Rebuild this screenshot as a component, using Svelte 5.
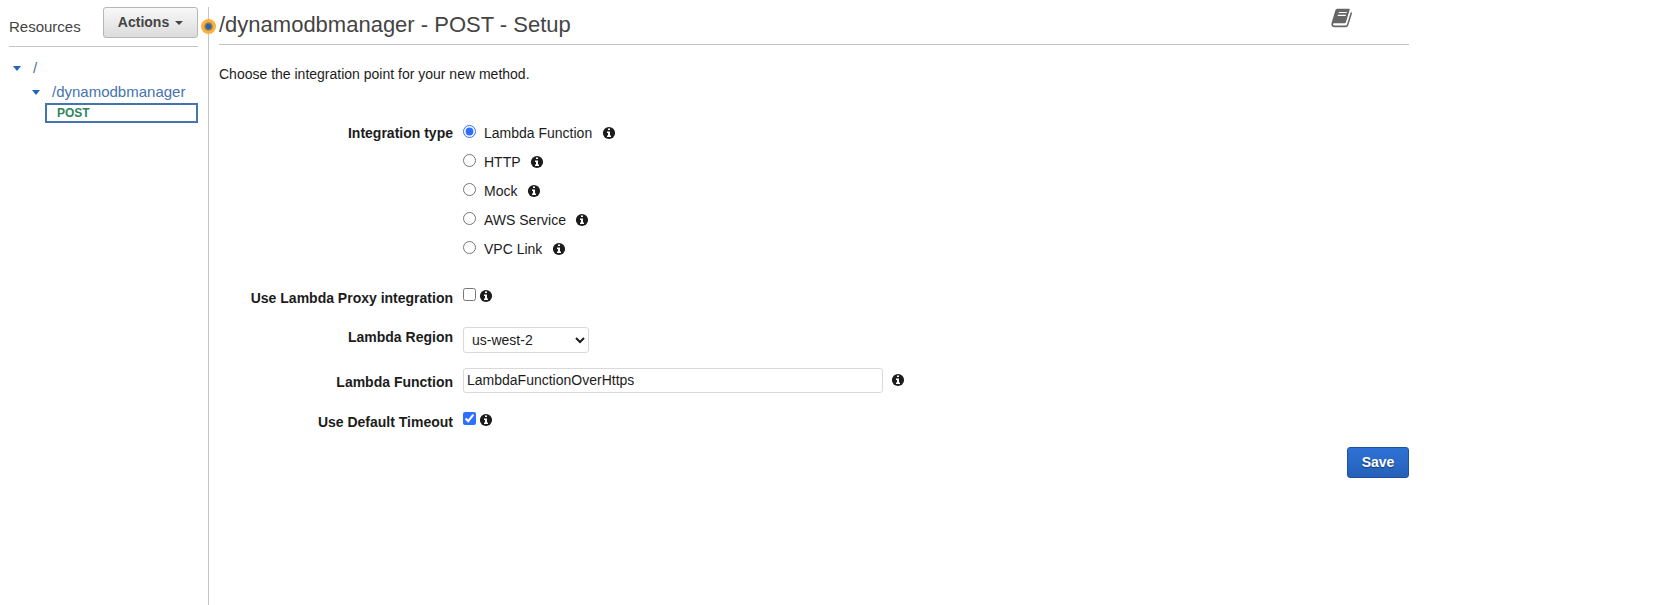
<script>
  const types = ['Lambda Function', 'HTTP', 'Mock', 'AWS Service', 'VPC Link'];
  let selected = $state('Lambda Function');
  let proxy = $state(false);
  let timeout = $state(true);
  let region = $state('us-west-2');
  let fn = $state('LambdaFunctionOverHttps');
</script>

{#snippet info()}
  <svg class="info" viewBox="0 0 12 12" width="12" height="12" aria-hidden="true">
    <circle cx="6" cy="6" r="6.1" fill="#1c1c1c" />
    <path d="M5 1.5h2v1.6H5zM4 4.4h3v4.1h1V10H4V8.5h1V6H4z" fill="#fff" />
  </svg>
{/snippet}

<div class="page">
  <aside>
    <div class="side-head">
      <span class="side-title">Resources</span>
      <button class="actions">Actions <i class="caret"></i></button>
    </div>
    <nav>
      <a class="node root" href="#root"><i class="arrow"></i><span>/</span></a>
      <a class="node child" href="#child"><i class="arrow"></i><span>/dynamodbmanager</span></a>
      <div class="method">POST</div>
    </nav>
  </aside>

  <div class="divider"><span class="handle"></span></div>

  <main>
    <header>
      <h1>/dynamodbmanager - POST - Setup</h1>
      <svg class="book" width="22" height="20" viewBox="0 0 22 20" aria-hidden="true">
        <path d="M6.2 .7H17.8Q19 .7 18.7 1.8L15 14Q14.6 15.3 13.3 15.3H3.2Q1.9 15.3 2 16.3Q2.2 17.6 3.6 17.6H14.6Q15.7 17.6 16 16.5L19.9 3.7Q21.3 4.5 20.9 5.8L17.3 17.2Q16.7 19.2 14.7 19.2H3.4Q.4 19.2 .4 16.2Q.4 15 .9 13.7L4.4 2.2Q4.8 .7 6.2 .7Z" fill="#666" />
        <path d="M7.7 4.5H15.7M6.8 7.4H14.8" stroke="#fff" stroke-width="1.2" />
      </svg>
    </header>
    <p class="intro">Choose the integration point for your new method.</p>

    <div class="row type-row">
      <span class="label">Integration type</span>
      <div class="types">
        {#each types as type}
          <label class="option">
            <input type="radio" name="type" value={type} bind:group={selected} />
            <span>{type}</span>
            {@render info()}
          </label>
        {/each}
      </div>
    </div>
    <div class="row proxy-row">
      <label class="label" for="proxy">Use Lambda Proxy integration</label>
      <div class="check"><input id="proxy" type="checkbox" bind:checked={proxy} />{@render info()}</div>
    </div>
    <div class="row region-row">
      <label class="label" for="region">Lambda Region</label>
      <select id="region" bind:value={region}><option>us-west-2</option></select>
    </div>
    <div class="row function-row">
      <label class="label" for="fn">Lambda Function</label>
      <div class="field"><input id="fn" type="text" spellcheck="false" bind:value={fn} />{@render info()}</div>
    </div>
    <div class="row timeout-row">
      <label class="label" for="timeout">Use Default Timeout</label>
      <div class="check"><input id="timeout" type="checkbox" bind:checked={timeout} />{@render info()}</div>
    </div>
    <div class="footer"><button class="save">Save</button></div>
  </main>
</div>

<style>
  :global(body) { margin: 0; background: #fff; overflow: hidden; }
  .page {
    display: flex;
    height: 605px;
    box-sizing: border-box;
    padding: 7px 0 0 9px;
    font: 14px/20px "Liberation Sans", Arial, sans-serif;
    color: #1c1c1c;
  }
  aside { width: 189px; }
  .side-head {
    display: flex;
    justify-content: space-between;
    height: 39px;
    border-bottom: 1px solid #c4c4c4;
  }
  .side-title { font-size: 15px; color: #444; padding-top: 10px; }
  button { font: bold 14px/20px "Liberation Sans", Arial, sans-serif; box-sizing: border-box; }
  .actions {
    width: 95px;
    height: 31px;
    padding: 0 0 1px;
    display: flex;
    align-items: center;
    justify-content: center;
    gap: 6px;
    color: #444;
    border: 1px solid #b7b7b7;
    border-radius: 3px;
    background: linear-gradient(#f8f8f8, #dcdcdc);
  }
  .caret { border: 4px solid transparent; border-top-color: #444; border-bottom: 0; margin-top: 2px; }
  nav { padding-top: 9px; }
  .node {
    display: flex;
    height: 24px;
    line-height: 24px;
    align-items: flex-start;
    font-size: 15px;
    color: #4574ae;
    text-decoration: none;
  }
  .arrow { border: 4.5px solid transparent; border-top: 5px solid #2463bd; border-bottom: 0; margin-top: 10px; }
  .root { padding-left: 4px; gap: 12px; }
  .child { padding-left: 23px; gap: 12px; height: 22px; }
  .method {
    box-sizing: border-box;
    height: 20px;
    margin: 1px 0 0 36px;
    padding-left: 10px;
    border: 2px solid #4574ae;
    font: bold 12px/16px "Liberation Sans", Arial, sans-serif;
    color: #2f855a;
  }
  .divider { width: 1px; margin-left: 10px; background: #c4c4c4; position: relative; flex: none; }
  .handle {
    position: absolute;
    left: -7px;
    top: 12px;
    width: 15px;
    height: 15px;
    border-radius: 50%;
    background: radial-gradient(circle, #2463bd 0 2.2px, #8a7958 3px 3.6px, #fbb03b 4.6px);
  }
  main { width: 1190px; margin-left: 10px; }
  header {
    display: flex;
    justify-content: space-between;
    height: 37px;
    border-bottom: 1px solid #c4c4c4;
  }
  h1 { margin: 0; font-size: 22px; font-weight: normal; line-height: 36px; color: #444; }
  .book { margin: 1px 56px 0 0; }
  .intro { margin: 19px 0 0; }
  .row { display: grid; grid-template-columns: 234px 1fr; column-gap: 10px; align-items: start; }
  .label { font-weight: bold; text-align: right; }
  .type-row { margin-top: 39px; height: 165px; }
  .option { display: flex; height: 29px; }
  input, select { margin: 0; accent-color: #2f6fff; box-sizing: border-box; }
  input[type='radio'] { width: 13px; height: 13px; margin: 2px 8px 0 0; }
  input[type='checkbox'] { width: 13px; height: 13px; }
  .info { flex: none; display: block; overflow: visible; }
  .option .info { margin: 4px 0 0 10.5px; }
  .proxy-row { height: 39px; }
  .check { display: flex; gap: 4px; }
  .check .info { margin-top: 2px; }
  .region-row { height: 41px; }
  select {
    width: 126px;
    height: 26px;
    padding: 0 0 0 4px;
    border: 1px solid #d9d9d9;
    border-radius: 3px;
    background: #fff;
    color: #1c1c1c;
    font: 14px/20px "Liberation Sans", Arial, sans-serif;
  }
  .function-row { height: 44px; }
  .function-row .label { margin-top: 4px; }
  .field { display: flex; align-items: center; gap: 9px; }
  .field .info { margin-top: -1px; }
  .field input {
    width: 420px;
    height: 25px;
    padding: 0 3px 1px;
    border: 1px solid #d9d9d9;
    border-radius: 3px;
    color: #1c1c1c;
    font: 14px/20px "Liberation Sans", Arial, sans-serif;
  }
  .timeout-row { height: 35px; }
  .footer { display: flex; justify-content: flex-end; }
  .save {
    width: 62px;
    height: 31px;
    padding: 0 0 1px;
    color: #fff;
    border: 1px solid #1f509a;
    border-radius: 3px;
    background: linear-gradient(#2e72d6, #2460b8);
    text-shadow: 0 1px 1px #17396d;
  }
</style>
